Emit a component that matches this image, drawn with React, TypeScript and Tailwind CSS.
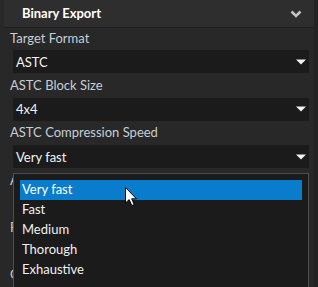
import React from 'react';

const font = { fontFamily: '"Segoe UI", Lato, "Noto Sans", sans-serif' };

const Caret: React.FC = () => (
  <svg width="10" height="6" viewBox="0 0 10 6" className="shrink-0">
    <path d="M0 0.5 H10 L5 5.5 Z" fill="#f2f2f2" />
  </svg>
);

const Select: React.FC<{ value: string }> = ({ value }) => (
  <div className="ml-[13px] mr-[5px] h-6 bg-[#1b1b1b] flex items-center justify-between pl-[3px] pr-[3px]">
    <span className="text-[13px] text-[#f4f4f4] pt-[2px]">{value}</span>
    <Caret />
  </div>
);

const Label: React.FC<{ text: string; first?: boolean }> = ({ text, first }) => (
  <div className={`${first ? 'h-[23px]' : 'h-[25px]'} pl-[10px] flex items-end pb-[2px] text-[13px] text-[#c6ced6] whitespace-nowrap`}>
    {text}
  </div>
);

const options = ['Very fast', 'Fast', 'Medium', 'Thorough', 'Exhaustive'];

const App: React.FC = () => {
  return (
    <div className="relative w-[318px] h-[287px] overflow-hidden bg-[#232323]" style={font}>
      <div className="w-[314px] h-full bg-[#282828] flex flex-col">
        {/* Header */}
        <div className="ml-1 h-7 shrink-0 bg-[#2e2e2e] border-b border-[#1e1e1e] flex items-center justify-between pl-[18px] pr-[12px]">
          <span className="text-[13px] font-bold text-white">Binary Export</span>
          <svg width="12" height="8" viewBox="0 0 12 8">
            <path d="M1.5 1.5 L6 6 L10.5 1.5" fill="none" stroke="#c4c4c4" strokeWidth="2.6" />
          </svg>
        </div>

        <Label text="Target Format" first />
        <Select value="ASTC" />
        <Label text="ASTC Block Size" />
        <Select value="4x4" />
        <Label text="ASTC Compression Speed" />
        <Select value="Very fast" />
        <Label text="ASTC Quality" />
        <Select value="Normal" />
        <Label text="Premultiply Alpha" />
        <Select value="On" />
        <Label text="Compression" />
      </div>

      {/* Open dropdown list */}
      <div className="absolute left-[13px] top-[173px] w-[296px] h-[116px] bg-[#1b1b1b] border border-[#4e4e4e] pt-[6px] px-[6px]">
        {options.map((o, i) => (
          <div
            key={o}
            className={`h-5 flex items-center pl-[2px] text-[13px] ${i === 0 ? 'bg-[#0a7ccc] text-white' : 'text-[#f0f0f0]'}`}
          >
            {o}
          </div>
        ))}
      </div>

      {/* Mouse cursor */}
      <svg className="absolute left-[125px] top-[187px]" width="13" height="20" viewBox="0 0 13 20">
        <path
          d="M0.5 0.5 V16 L4.2 12.6 L6.8 18.6 L9.2 17.6 L6.7 11.8 H11.5 Z"
          fill="#ffffff"
          stroke="#000000"
          strokeWidth="1"
          strokeLinejoin="round"
        />
      </svg>
    </div>
  );
};

export default App;
